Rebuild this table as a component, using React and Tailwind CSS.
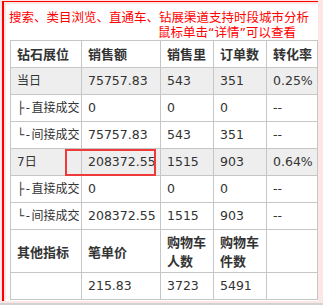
import React from 'react';

const rows = [
  { name: '当日', amt: '75757.83', qty: '543', orders: '351', rate: '0.25%', shade: true },
  { tree: '├-', name: '直接成交', amt: '0', qty: '0', orders: '0', rate: '--' },
  { tree: '└-', name: '间接成交', amt: '75757.83', qty: '543', orders: '351', rate: '--' },
  { name: '7日', amt: '208372.55', qty: '1515', orders: '903', rate: '0.64%', shade: true },
  { tree: '├-', name: '直接成交', amt: '0', qty: '0', orders: '0', rate: '--' },
  { tree: '└-', name: '间接成交', amt: '208372.55', qty: '1515', orders: '903', rate: '--' },
];

const cell = 'border border-[#c6c6c6] pl-[6px] align-middle';
const num = 'text-[12.5px]';

export default function App() {
  return (
    <div className="relative w-[323px] h-[305px] overflow-hidden bg-[#fde6e6] border-b-2 border-[#d2d2d2] font-['DejaVu_Sans','Noto_Sans_CJK_SC',sans-serif]">
      <div className="ml-[2px] mt-[1px] w-[316px] h-[300px] bg-white border-l-2 border-t border-[#ff0000] shadow-[inset_2px_2px_0_#fde6e6]">
        <div className="pl-[5px] pt-[8px] text-[#ff0000] text-[12.5px] leading-[15px]">
          <div>搜索、类目浏览、直通车、钻展渠道支持时段城市分析</div>
          <div className="text-right pr-[22px]">鼠标单击“详情”可以查看</div>
        </div>

        <table className="ml-[6px] w-[307px] table-fixed border-collapse text-[12px] text-[#333]">
          <colgroup>
            <col className="w-[71px]" />
            <col className="w-[79px]" />
            <col className="w-[53px]" />
            <col className="w-[53px]" />
            <col className="w-[51px]" />
          </colgroup>
          <tbody>
            <tr className="h-[27px] font-bold text-[13px] font-['Noto_Sans_CJK_SC',sans-serif]">
              <td className={cell}>钻石展位</td>
              <td className={cell}>销售额</td>
              <td className={cell}>销售里</td>
              <td className={cell}>订单数</td>
              <td className={cell}>转化率</td>
            </tr>
            {rows.map((r, i) => (
              <tr key={i} className={r.shade ? 'h-[27px] bg-[#eeeeee]' : 'h-[27px]'}>
                <td className={cell + ' whitespace-nowrap'}>
                  {r.tree && (
                    <span className="font-['DejaVu_Sans_Mono',monospace]">{r.tree}</span>
                  )}
                  {r.name}
                </td>
                <td className={cell + ' ' + num}>{r.amt}</td>
                <td className={cell + ' ' + num}>{r.qty}</td>
                <td className={cell + ' ' + num}>{r.orders}</td>
                <td className={cell + ' ' + num}>{r.rate}</td>
              </tr>
            ))}
            <tr className="h-[43px] font-bold text-[13px] leading-[19px] font-['Noto_Sans_CJK_SC',sans-serif]">
              <td className={cell}>其他指标</td>
              <td className={cell}>笔单价</td>
              <td className={cell}>购物车<br />人数</td>
              <td className={cell}>购物车<br />件数</td>
              <td className={cell}></td>
            </tr>
            <tr className="h-[27px]">
              <td className={cell}></td>
              <td className={cell + ' ' + num}>215.83</td>
              <td className={cell + ' ' + num}>3723</td>
              <td className={cell + ' ' + num}>5491</td>
              <td className={cell}></td>
            </tr>
          </tbody>
        </table>
      </div>

      <div className="absolute left-[65px] top-[149px] w-[91px] h-[27px] border-2 border-[#f03a3a]" />
    </div>
  );
}
